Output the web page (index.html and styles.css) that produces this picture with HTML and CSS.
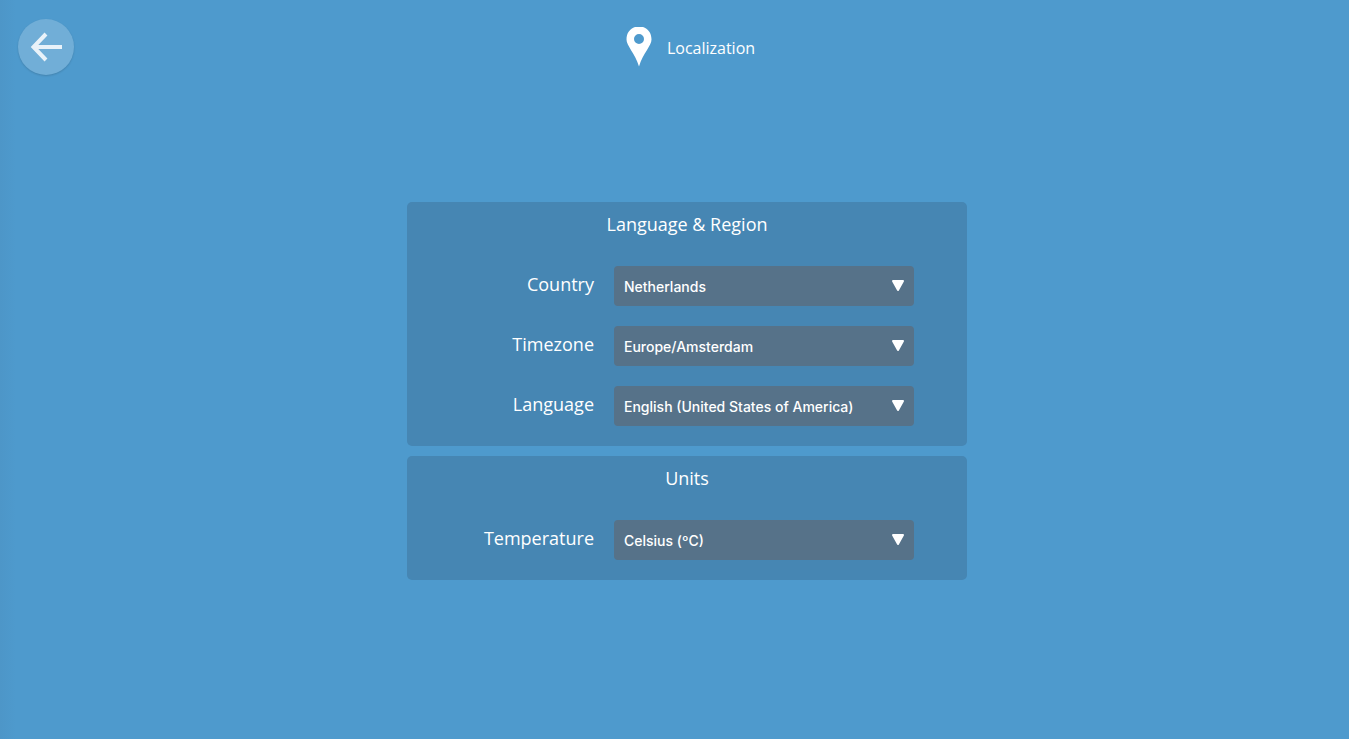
FILE: index.html
```html
<!DOCTYPE html>
<html lang="en">
<head>
    <meta charset="UTF-8">
    <title>Localization</title>
    <link rel="stylesheet" href="styles.css">
</head>
<body>
<header class="topbar">
    <button type="button" class="back" aria-label="Back">
        <svg width="56" height="56" viewBox="0 0 56 56" fill="none" stroke="#fff" stroke-width="4">
            <path d="M44 28H16M28 15L15.500 28L28 41"/>
        </svg>
    </button>
    <h1 class="title">
        <svg width="26" height="40" viewBox="0 0 26 40">
            <path fill="#fff" fill-rule="evenodd" d="M9 0H17C22 1.500 25.500 6 25.500 12.500C25.500 19 17 26 13 39.500C9 26 0.500 19 0.500 12.500C0.500 6 4 1.500 9 0ZM13 7A5 5 0 1 0 13 17A5 5 0 1 0 13 7Z"/>
        </svg>
        <span>Localization</span>
    </h1>
</header>
<main class="settings">
    <section class="panel">
        <h2>Language &amp; Region</h2>
        <div class="row">
            <label for="country">Country</label>
            <div class="select">
                <select id="country"><option>Netherlands</option></select>
                <svg class="arrow" viewBox="0 0 14 13"><path d="M2 2H12L7 11Z"/></svg>
            </div>
        </div>
        <div class="row">
            <label for="timezone">Timezone</label>
            <div class="select">
                <select id="timezone"><option>Europe/Amsterdam</option></select>
                <svg class="arrow" viewBox="0 0 14 13"><path d="M2 2H12L7 11Z"/></svg>
            </div>
        </div>
        <div class="row">
            <label for="language">Language</label>
            <div class="select">
                <select id="language"><option>English (United States of America)</option></select>
                <svg class="arrow" viewBox="0 0 14 13"><path d="M2 2H12L7 11Z"/></svg>
            </div>
        </div>
    </section>
    <section class="panel">
        <h2>Units</h2>
        <div class="row">
            <label for="temperature">Temperature</label>
            <div class="select">
                <select id="temperature"><option>Celsius (ºC)</option></select>
                <svg class="arrow" viewBox="0 0 14 13"><path d="M2 2H12L7 11Z"/></svg>
            </div>
        </div>
    </section>
</main>
</body>
</html>
```
FILE: styles.css
```css
* {
    margin: 0;
    padding: 0;
    box-sizing: border-box;
}

body {
    min-height: 100vh;
    display: flex;
    flex-direction: column;
    background: linear-gradient(to right, #4d96c8, #4e9acd 16px);
    color: #fff;
    font-family: "Open Sans", sans-serif;
}

.topbar {
    display: grid;
    grid-template-columns: 1fr auto 1fr;
    align-items: center;
    padding: 19px 18px 17px;
}

.back {
    width: 56px;
    height: 56px;
    border: none;
    border-radius: 50%;
    background-color: rgba(255, 255, 255, 0.2);
    box-shadow: 0 1px 2px rgba(0, 0, 0, 0.15);
    cursor: pointer;
}

.back svg {
    display: block;
    opacity: 0.85;
}

.title {
    grid-column: 2;
    display: flex;
    align-items: center;
    gap: 15px;
    font-size: 16px;
    font-weight: 400;
    margin-left: 32px;
}

.title span {
    padding-top: 2px;
}

.settings {
    flex: 1;
    display: flex;
    flex-direction: column;
    justify-content: center;
    align-items: center;
    gap: 10px;
    padding: 0 0 50px 25px;
}

.panel {
    width: 100%;
    max-width: 560px;
    padding-bottom: 20px;
    border-radius: 5px;
    background-color: #4686b3;
}

.panel h2 {
    font-size: 18px;
    line-height: 24px;
    font-weight: 400;
    text-align: center;
    padding: 10px 0 30px;
}

.row {
    display: grid;
    grid-template-columns: 1fr 300px;
    gap: 20px;
    padding-right: 53px;
}

.row + .row {
    margin-top: 20px;
}

.row label {
    font-size: 18px;
    line-height: 36px;
    text-align: right;
}

.select {
    position: relative;
}

.arrow {
    position: absolute;
    right: 9px;
    top: 13px;
    width: 14px;
    height: 13px;
    fill: #fff;
    stroke: #fff;
    stroke-width: 2;
    stroke-linejoin: round;
    pointer-events: none;
}

.select select {
    display: block;
    appearance: none;
    width: 100%;
    height: 40px;
    padding: 2px 30px 0 10px;
    border: none;
    border-radius: 4px;
    background-color: #567289;
    color: #fff;
    font-family: Inter, sans-serif;
    font-size: 14px;
    font-weight: 500;
}
```
